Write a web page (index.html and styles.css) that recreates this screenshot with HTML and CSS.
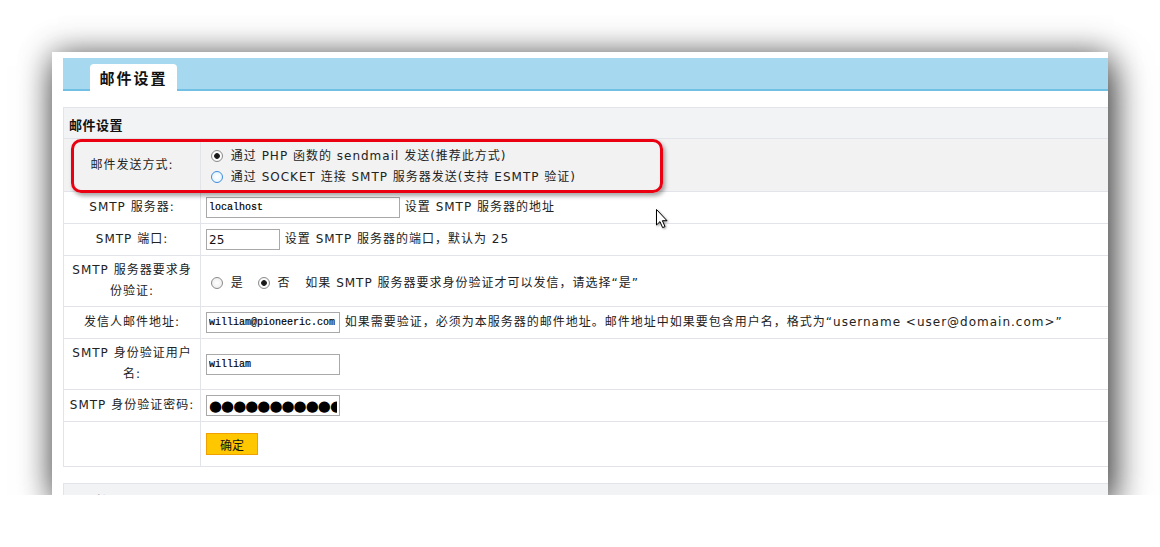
FILE: index.html
```html
<!DOCTYPE html>
<html lang="zh-CN">
<head>
    <meta charset="UTF-8">
    <title>邮件设置</title>
    <link rel="stylesheet" href="styles.css">
</head>
<body>

    <div class="shot">
        <div class="page">
            <div class="tabbar">
                <div class="tab">邮件设置</div>
            </div>

            <table class="form-table">
                <tr class="section"><th colspan="2">邮件设置</th></tr>
                <tr class="row-tall hover">
                    <td class="label">邮件发送方式:</td>
                    <td class="field">
                        <label class="option"><input type="radio" name="mailsend" checked> 通过 PHP 函数的 sendmail 发送(推荐此方式)</label>
                        <label class="option"><input type="radio" name="mailsend" class="focus"> 通过 SOCKET 连接 SMTP 服务器发送(支持 ESMTP 验证)</label>
                    </td>
                </tr>
                <tr>
                    <td class="label">SMTP 服务器:</td>
                    <td class="field"><input type="text" class="txt txt-long mono" value="localhost"> 设置 SMTP 服务器的地址</td>
                </tr>
                <tr>
                    <td class="label">SMTP 端口:</td>
                    <td class="field"><input type="text" class="txt txt-short" value="25"> 设置 SMTP 服务器的端口，默认为 25</td>
                </tr>
                <tr class="row-mid">
                    <td class="label">SMTP 服务器要求身份验证:</td>
                    <td class="field">
                        <label class="inline"><input type="radio" name="auth"> 是</label>
                        <label class="inline"><input type="radio" name="auth" checked> 否</label>
                        <span class="hint">如果 SMTP 服务器要求身份验证才可以发信，请选择“是”</span>
                    </td>
                </tr>
                <tr>
                    <td class="label">发信人邮件地址:</td>
                    <td class="field"><input type="text" class="txt mono" value="william@pioneeric.com"> 如果需要验证，必须为本服务器的邮件地址。邮件地址中如果要包含用户名，格式为“username &lt;user@domain.com&gt;”</td>
                </tr>
                <tr class="row-mid">
                    <td class="label">SMTP 身份验证用户名:</td>
                    <td class="field"><input type="text" class="txt mono" value="william"></td>
                </tr>
                <tr>
                    <td class="label">SMTP 身份验证密码:</td>
                    <td class="field"><input type="text" class="txt dots" value="●●●●●●●●●●●●●●" readonly></td>
                </tr>
                <tr class="row-btn">
                    <td class="label"></td>
                    <td class="field"><button type="submit" class="btn">确定</button></td>
                </tr>
            </table>

            <table class="form-table next">
                <tr class="section"><th>邮件检测</th></tr>
            </table>
        </div>

        <div class="mark"></div>

        <svg class="cursor" width="14" height="22" viewBox="0 0 14 22">
            <path d="M1.5 1.5 L1.5 17 L5 13.6 L7.6 19.6 L10 18.6 L7.4 12.7 L12 12.7 Z" fill="#fff" stroke="#000" stroke-width="1" stroke-linejoin="round"/>
        </svg>
    </div>

</body>
</html>
```

FILE: styles.css
```css
body {
    margin: 0;
    background: #fff;
    font-family: "DejaVu Sans", "Noto Sans CJK SC", sans-serif;
    font-size: 12px;
    color: #222;
}

.shot {
    position: relative;
    width: 1056px;
    height: 443px;
    margin: 52px 0 0 52px;
    background: #fff;
    box-shadow: 0 0 30px rgba(0, 0, 0, 0.45), 6px 14px 34px rgba(0, 0, 0, 0.6);
    overflow: hidden;
}

.page {
    width: 1120px;
    padding: 6px 0 0 11px;
}

.tabbar {
    height: 31px;
    background: #a6d9ef;
    border-bottom: 2px solid #72c1e5;
    display: flex;
    align-items: flex-end;
    padding-left: 27px;
}

.tab {
    width: 87px;
    height: 27px;
    margin-bottom: -2px;
    background: #fff;
    border-radius: 4px 4px 0 0;
    text-align: center;
    font-size: 15px;
    font-weight: bold;
    line-height: 30px;
    letter-spacing: 2px;
    color: #111;
}

.form-table {
    width: 1100px;
    margin-top: 16px;
    border-collapse: collapse;
    border: 1px solid #e3e4e9;
    letter-spacing: 1px;
}

.form-table td {
    height: 23px;
    padding: 4px 5px;
    border-top: 1px solid #e3e4e9;
    vertical-align: middle;
}

.section th {
    height: 27px;
    padding: 3px 5px 0;
    background: #f2f3f5;
    text-align: left;
    font-size: 13px;
    font-weight: bold;
    letter-spacing: 0.5px;
    color: #111;
}

.form-table td.label {
    width: 128px;
    padding: 4px 4px;
    text-align: center;
    line-height: 21px;
    border-right: 1px solid #e3e4e9;
}

.row-tall td {
    height: 44px;
}

.form-table .row-tall td.field {
    padding-top: 6px;
    padding-bottom: 2px;
}

.row-mid td {
    height: 41px;
}

.row-btn td {
    height: 36px;
}

.hover td {
    background: #f2f2f2;
}

.option {
    display: block;
    line-height: 21px;
}

input[type="radio"] {
    appearance: none;
    width: 12px;
    height: 12px;
    margin: 0 3px 0 5px;
    vertical-align: -2px;
    border: 1px solid #8b8b8b;
    border-radius: 50%;
    background: radial-gradient(circle, #fff 0, #e9e9e9 100%);
}

input[type="radio"]:checked {
    background: radial-gradient(circle, #111 0, #222 2.5px, #fff 3.2px, #ececec 100%);
}

input[type="radio"].focus {
    border-color: #3d8ee0;
    background: radial-gradient(circle, #fff 0, #dff0fb 100%);
}

.inline {
    margin-right: 4px;
}

.hint {
    margin-left: 6px;
}

.txt {
    width: 128px;
    height: 15px;
    padding: 2px 2px;
    border: 1px solid #a9a9a9;
    font-family: "DejaVu Sans", sans-serif;
    font-size: 12px;
    color: #111;
    vertical-align: middle;
    outline: none;
}

.txt-long {
    width: 188px;
}

.txt-short {
    width: 68px;
}

.mono {
    font-family: "Liberation Mono", monospace;
    font-size: 10px;
    color: #000;
    -webkit-text-stroke: 0.2px #000;
}

.dots {
    font-size: 15px;
    letter-spacing: -1px;
    color: #000;
    overflow: hidden;
}

.btn {
    width: 52px;
    height: 22px;
    padding: 0;
    background: #ffc700;
    border: 1px solid #f0a000;
    font-family: "DejaVu Sans", "Noto Sans CJK SC", sans-serif;
    font-size: 12px;
    color: #111;
    cursor: pointer;
}

.next {
    margin-top: 16px;
}

.mark {
    position: absolute;
    left: 19px;
    top: 87px;
    width: 586px;
    height: 48px;
    border: 3px solid #ea0010;
    border-radius: 10px;
    box-shadow: 2px 3px 4px rgba(0, 0, 0, 0.35);
}

.cursor {
    position: absolute;
    left: 603px;
    top: 156px;
    filter: drop-shadow(1px 1px 1px rgba(0, 0, 0, 0.4));
}
```
